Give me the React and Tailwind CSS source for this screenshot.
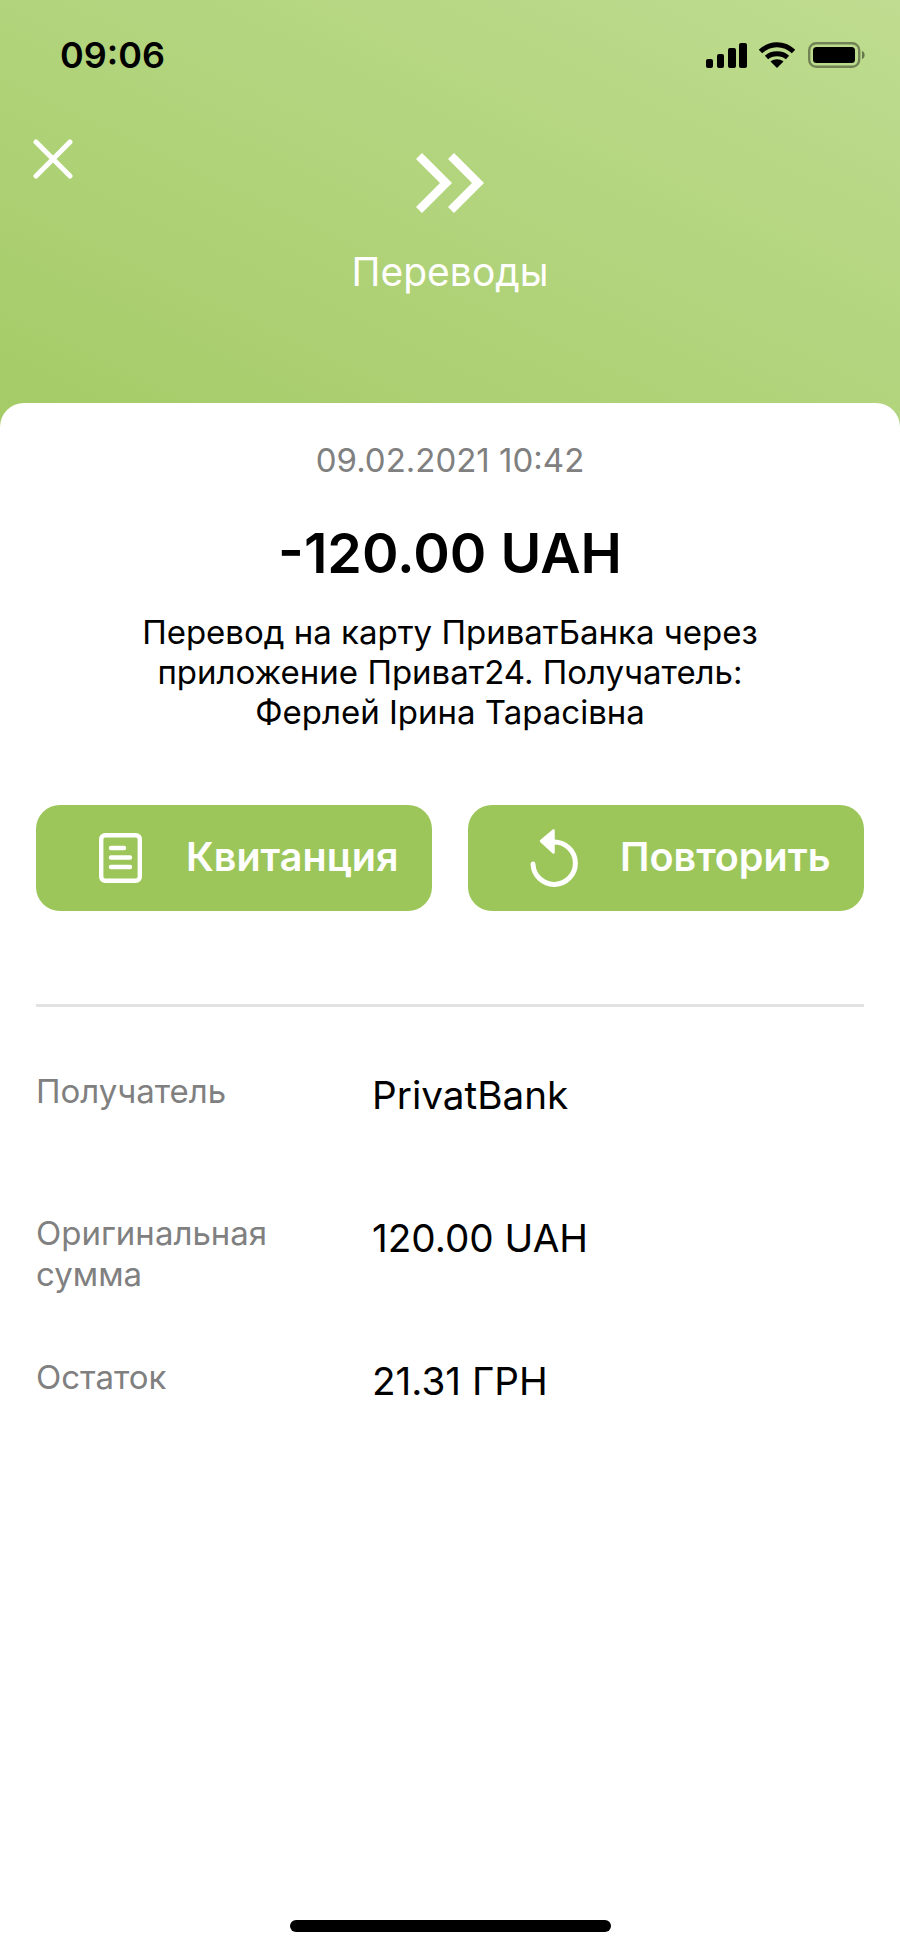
const font = { fontFamily: 'Inter, "Liberation Sans", sans-serif' };

function StatusIcons() {
  return (
    <div className="flex items-start">
      <svg width="41" height="26" viewBox="0 0 41 26" fill="#000">
        <rect x="0" y="17" width="7" height="9" rx="2" />
        <rect x="11" y="12" width="7" height="14" rx="2" />
        <rect x="22" y="6" width="8" height="20" rx="2" />
        <rect x="33" y="1" width="8" height="25" rx="2" />
      </svg>
      <svg width="36" height="26" viewBox="0 0 36 26" fill="none" stroke="#000" strokeWidth="4.8" className="ml-[12px]">
        <path d="M1.5 9.5 C11 0.5 25 0.5 34.5 9.5" />
        <path d="M7.5 15.5 C13 10.5 23 10.5 28.5 15.5" />
        <path d="M18 26 L11.5 19.6 C15.5 16.4 20.5 16.4 24.5 19.6 Z" fill="#000" stroke="none" />
      </svg>
      <svg width="58" height="26" viewBox="0 0 58 26" className="ml-[13px]">
        <rect x="1.2" y="1.2" width="50" height="23.6" rx="7" fill="none" stroke="#000" strokeOpacity="0.4" strokeWidth="2.4" />
        <rect x="5" y="5" width="42" height="16" rx="3.5" fill="#000" />
        <path d="M54 9 C57.5 10 57.5 16 54 17 Z" fill="#000" fillOpacity="0.45" />
      </svg>
    </div>
  );
}

function ActionButton({ icon, label, textClass }) {
  return (
    <button className="flex h-[106px] w-[396px] items-center rounded-[24px] bg-[#9cc65a] text-white">
      {icon}
      <span className={`text-[39.5px] font-semibold leading-none ${textClass}`}>{label}</span>
    </button>
  );
}

function Row({ label, value, className, labelClass }) {
  return (
    <div className={`flex items-start ${className}`}>
      <div className={`w-[336px] shrink-0 text-[33px] leading-[41px] text-[#808080] ${labelClass}`}>{label}</div>
      <div className="pt-[2px] text-[38.7px] leading-[43px] text-black">{value}</div>
    </div>
  );
}

export default function App() {
  return (
    <div style={font} className="relative flex h-[1948px] w-[900px] flex-col overflow-hidden bg-white">
      <div className="h-[430px] shrink-0 bg-gradient-to-tr from-[#a4cb66] to-[#bfdc90]">
        <div className="flex h-[110px] items-start justify-between pl-[60px] pr-[34px] pt-[34px]">
          <span className="text-[36px] font-semibold leading-[42px] text-black">09:06</span>
          <div className="pt-[8px]"><StatusIcons /></div>
        </div>

        <div className="relative">
          <svg className="absolute left-[33px] top-[29px]" width="40" height="40" viewBox="0 0 40 40" fill="none" stroke="#fff" strokeWidth="5" strokeLinecap="round">
            <path d="M3 3 L37 37 M37 3 L3 37" />
          </svg>
          <div className="flex flex-col items-center pt-[43px]">
            <svg width="68" height="60" viewBox="0 0 68 60" fill="#fff">
              <path d="M6 0 L36 30 L6 60 L0 54 L24 30 L0 6 Z" />
              <path d="M38 0 L68 30 L38 60 L32 54 L56 30 L32 6 Z" />
            </svg>
            <div className="mt-[37px] text-[39px] leading-[44px] text-white">Переводы</div>
          </div>
        </div>
      </div>

      <div className="-mt-[27px] flex flex-1 flex-col rounded-t-[24px] bg-white px-[36px]">
        <div className="mt-[38px] text-center text-[33px] leading-[38px] text-[#808080]">09.02.2021 10:42</div>
        <div className="mt-[42px] text-center text-[55.5px] font-semibold leading-[64px] text-black">-120.00 UAH</div>
        <div className="mt-[27px] text-center text-[33px] leading-[40px] text-black">
          Перевод на карту ПриватБанка через<br />приложение Приват24. Получатель:<br />Ферлей Ірина Тарасівна
        </div>
        <div className="mt-[73px] flex justify-between">
          <ActionButton
            label="Квитанция"
            textClass="ml-[44px]"
            icon={
              <svg width="43" height="50" viewBox="0 0 43 50" fill="none" stroke="#fff" strokeLinecap="round" className="ml-[63px]">
                <rect x="2.2" y="2.2" width="38.6" height="45.6" rx="4" strokeWidth="4.4" />
                <path d="M12 15 H25 M12 24.5 H31 M12 34 H31" strokeWidth="4.4" />
              </svg>
            }
          />
          <ActionButton
            label="Повторить"
            textClass="ml-[42px]"
            icon={
              <svg width="48" height="58" viewBox="0 0 48 58" fill="none" stroke="#fff" strokeLinecap="round" className="ml-[62px]">
                <path d="M3 35 A21.2 21.2 0 1 0 24 13" strokeWidth="5" />
                <path d="M23.5 1.5 L11 12 L23.5 23.5 Z" fill="#fff" strokeWidth="2.5" strokeLinejoin="round" />
              </svg>
            }
          />
        </div>
        <div className="mt-[93px] h-[3px] bg-[#e3e3e3]" />
        <Row className="mt-[65px]" labelClass="-mt-[1px]" label="Получатель" value="PrivatBank" />
        <Row className="mt-[98px]" labelClass="-mt-[2px]" label={<>Оригинальная<br />сумма</>} value="120.00 UAH" />
        <Row className="mt-[63px]" labelClass="-mt-[1px]" label="Остаток" value="21.31 ГРН" />
      </div>

      <div className="absolute bottom-[16px] left-[290px] h-[12px] w-[321px] rounded-full bg-black" />
    </div>
  );
}
